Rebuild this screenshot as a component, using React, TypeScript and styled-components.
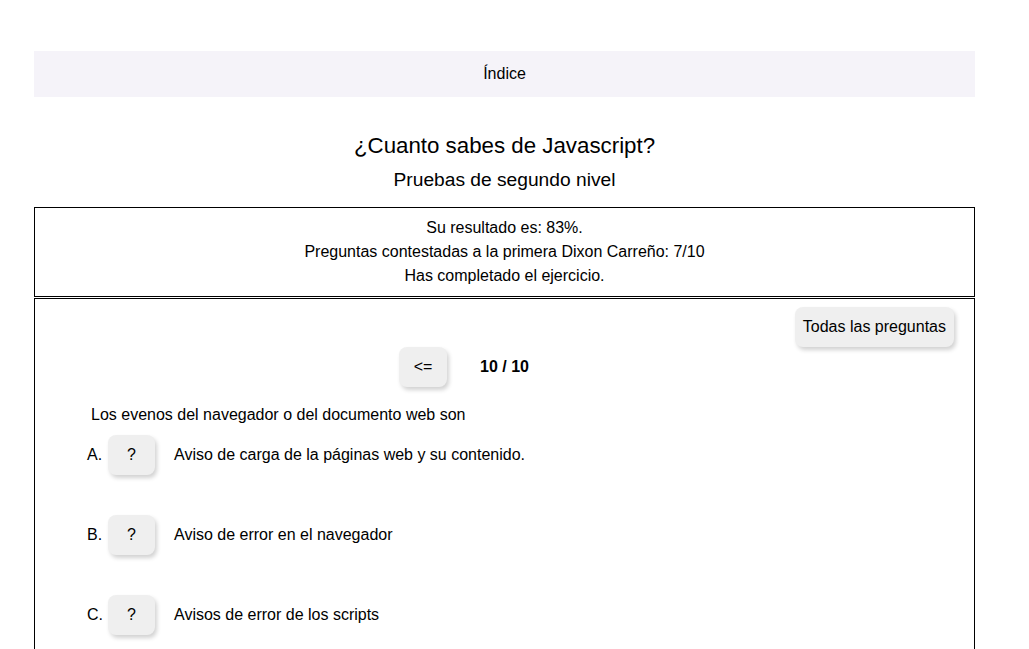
import React from "react";
import styled, { createGlobalStyle } from "styled-components";

const Global = createGlobalStyle`
  html, body { margin: 0; padding: 0; background: #ffffff; }
  body { font-family: "Liberation Sans", Arial, sans-serif; color: #000; font-size: 16px; }
`;

const Page = styled.div`
  width: 941px;
  margin-left: 34px;
  padding-top: 51px;
  display: flex;
  flex-direction: column;
`;

const IndexBar = styled.nav`
  height: 46px;
  background: #f5f3f9;
  display: flex;
  align-items: center;
  justify-content: center;
  font-size: 16px;
`;

const Title = styled.h1`
  margin: 36px 0 0;
  font-size: 22.3px;
  line-height: 26px;
  font-weight: 400;
  text-align: center;
`;

const Subtitle = styled.h2`
  margin: 10px 0 0;
  font-size: 19.2px;
  line-height: 22px;
  font-weight: 400;
  text-align: center;
`;

const ResultBox = styled.section`
  margin-top: 16px;
  border: 1px solid #000;
  padding: 8px 0 8px;
  display: flex;
  flex-direction: column;
  align-items: center;
`;

const ResultLine = styled.div`
  font-size: 16px;
  line-height: 24px;
`;

const QuizBox = styled.section`
  margin-top: 1px;
  border: 1px solid #000;
  padding: 8px 20px 0 0;
  min-height: 420px;
  display: flex;
  flex-direction: column;
`;

const Button = styled.button<{ $w?: number }>`
  height: 40px;
  ${(p) => (p.$w ? `width: ${p.$w}px;` : "padding: 0 8px;")}
  border: none;
  border-radius: 8px;
  background: #efefef;
  box-shadow: 2px 3px 4px rgba(0, 0, 0, 0.18);
  font-family: "Liberation Sans", Arial, sans-serif;
  font-size: 16px;
  color: #000;
  cursor: pointer;
`;

const TopRow = styled.div`
  display: flex;
  justify-content: flex-end;
`;

const Pager = styled.div`
  display: flex;
  justify-content: center;
  align-items: center;
  gap: 33px;
  padding-left: 20px;
`;

const Counter = styled.span`
  font-weight: 700;
  white-space: nowrap;
  min-width: 48px;
  text-align: center;
`;

const Hidden = styled.div`
  visibility: hidden;
`;

const Question = styled.p`
  margin: 16px 0 0 56px;
  font-size: 16px;
  line-height: 24px;
`;

const Options = styled.div`
  margin: 8px 0 0 52px;
  display: flex;
  flex-direction: column;
  gap: 40px;
`;

const OptionRow = styled.div`
  display: flex;
  align-items: center;
  height: 40px;
`;

const Letter = styled.span`
  width: 21px;
  font-size: 16px;
`;

const OptionText = styled.span`
  margin-left: 19px;
  font-size: 16px;
`;

const options = [
  { l: "A.", t: "Aviso de carga de la páginas web y su contenido." },
  { l: "B.", t: "Aviso de error en el navegador" },
  { l: "C.", t: "Avisos de error de los scripts" },
];

export default function App() {
  return (
    <>
      <Global />
      <Page>
        <IndexBar>Índice</IndexBar>
        <Title>¿Cuanto sabes de Javascript?</Title>
        <Subtitle>Pruebas de segundo nivel</Subtitle>
        <ResultBox>
          <ResultLine>Su resultado es: 83%.</ResultLine>
          <ResultLine>Preguntas contestadas a la primera Dixon Carreño: 7/10</ResultLine>
          <ResultLine>Has completado el ejercicio.</ResultLine>
        </ResultBox>
        <QuizBox>
          <TopRow>
            <Button>Todas las preguntas</Button>
          </TopRow>
          <Pager>
            <Button $w={48}>&lt;=</Button>
            <Counter>10 / 10</Counter>
            <Hidden>
              <Button $w={48}>=&gt;</Button>
            </Hidden>
          </Pager>
          <Question>Los evenos del navegador o del documento web son</Question>
          <Options>
            {options.map((o) => (
              <OptionRow key={o.l}>
                <Letter>{o.l}</Letter>
                <Button $w={47}>?</Button>
                <OptionText>{o.t}</OptionText>
              </OptionRow>
            ))}
          </Options>
        </QuizBox>
      </Page>
    </>
  );
}
